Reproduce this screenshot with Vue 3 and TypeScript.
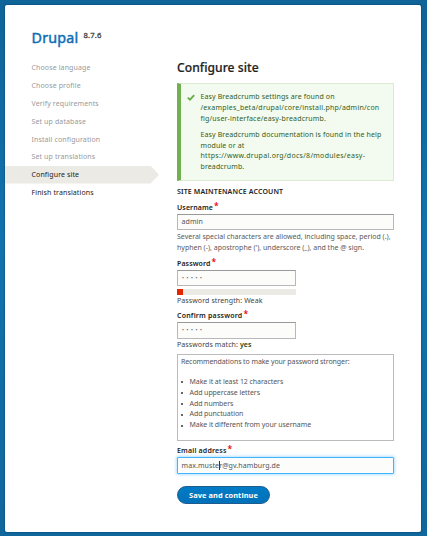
<script setup lang="ts">
import { ref } from 'vue'

interface Task {
  label: string
  state: 'done' | 'active' | 'pending'
}

const tasks: Task[] = [
  { label: 'Choose language', state: 'done' },
  { label: 'Choose profile', state: 'done' },
  { label: 'Verify requirements', state: 'done' },
  { label: 'Set up database', state: 'done' },
  { label: 'Install configuration', state: 'done' },
  { label: 'Set up translations', state: 'done' },
  { label: 'Configure site', state: 'active' },
  { label: 'Finish translations', state: 'pending' },
]

const tips: string[] = [
  'Make it at least 12 characters',
  'Add uppercase letters',
  'Add numbers',
  'Add punctuation',
  'Make it different from your username',
]

const strength = ref(5)
</script>

<template>
  <div class="page">
    <div class="card">
      <aside class="sidebar">
        <div class="brand">Drupal<span class="version">8.7.6</span></div>
        <ol class="tasks">
          <li v-for="t in tasks" :key="t.label" :class="t.state">{{ t.label }}</li>
        </ol>
      </aside>
      <main class="main">
        <h1>Configure site</h1>
        <div class="message">
          <svg class="check" viewBox="0 0 8 7"><path d="M0.8 3.6 L3 5.7 L7.2 1.2" /></svg>
          <p class="m1">Easy Breadcrumb settings are found on<br /><span class="path">/examples_beta/drupal/core/install.php/admin/con</span><br /><span class="path2">fig/user-interface/easy-breadcrumb.</span></p>
          <p>Easy Breadcrumb documentation is found in the help<br />module or at<br /><span class="url">https://www.drupal.org/docs/8/modules/easy-</span><br />breadcrumb.</p>
        </div>
        <h2>SITE MAINTENANCE ACCOUNT</h2>
        <label class="l-user">Username<i>*</i></label>
        <div class="field user">admin</div>
        <p class="desc">Several special characters are allowed, including space, period (.),<br /><span class="desc2">hyphen (-), apostrophe ('), underscore (_), and the @ sign.</span></p>
        <label class="l-pass">Password<i>*</i></label>
        <div class="field short"><span class="dots">•••••</span></div>
        <div class="meter"><div class="fill" :style="{ width: strength + '%' }"></div></div>
        <div class="status">Password strength: Weak</div>
        <label class="l-conf">Confirm password<i>*</i></label>
        <div class="field short conf"><span class="dots">•••••</span></div>
        <div class="status match">Passwords match: <b>yes</b></div>
        <div class="tips">
          <div class="intro">Recommendations to make your password stronger:</div>
          <ul>
            <li v-for="tip in tips" :key="tip">{{ tip }}</li>
          </ul>
        </div>
        <label class="l-mail">Email address<i>*</i></label>
        <div class="field mail">max.muste<span class="caret"></span>r@gv.hamburg.de</div>
        <button type="button">Save and continue</button>
      </main>
    </div>
  </div>
</template>

<style>
body {
  margin: 0;
  overflow: hidden;
}
</style>

<style scoped>
.page {
  box-sizing: border-box;
  width: 427px;
  height: 536px;
  padding: 5px 6px 4px 5px;
  background: linear-gradient(#0f6498, #1272ad 45%, #10679c);
  font-family: "Noto Sans", "Open Sans", sans-serif;
  font-size: 7px;
  line-height: 10.8px;
  color: #222;
  white-space: nowrap;
}
.card {
  box-sizing: border-box;
  display: flex;
  width: 416px;
  height: 527px;
  background: #fff;
  border-radius: 2px;
  box-shadow: 0 0 1px 1px rgba(0, 55, 100, 0.3);
}
.sidebar {
  width: 172px;
  padding-top: 22px;
}
.brand {
  display: flex;
  height: 32px;
  padding-left: 26.5px;
  font-size: 14.3px;
  line-height: 22px;
  letter-spacing: 0.2px;
  color: #0d6db5;
  -webkit-text-stroke: 0.45px #0d6db5;
}
.version {
  margin: -1px 0 0 5px;
  font-size: 7.7px;
  line-height: 18px;
  letter-spacing: 0.15px;
  color: #444;
  -webkit-text-stroke: 0.3px #444;
}
.tasks {
  list-style: none;
  margin: 0;
  padding: 0;
}
.tasks li {
  box-sizing: border-box;
  width: 154px;
  height: 17.8px;
  padding: 0.4px 0 0 26.5px;
  line-height: 17.8px;
  letter-spacing: 0.12px;
  color: #999;
}
.tasks li.active {
  background: #ebeae4;
  color: #222;
  clip-path: polygon(0 0, 145.5px 0, 100% 50%, 145.5px 100%, 0 100%);
}
.tasks li.pending {
  color: #222;
}
.main {
  width: 216.5px;
}
p, ul {
  margin: 0;
  padding: 0;
}
h1 {
  margin: 53px 0 5px;
  height: 20px;
  font-size: 12.1px;
  line-height: 20px;
  font-weight: 500;
  letter-spacing: 0.05px;
  color: #222;
  -webkit-text-stroke: 0.2px #222;
}
.message {
  position: relative;
  box-sizing: border-box;
  height: 98px;
  padding: 8px 0 0 19.5px;
  border: 1px solid #dcebd0;
  border-left: 4px solid #70b050;
  background: #f3faef;
  color: #325e1c;
}
.message p {
  letter-spacing: 0.12px;
}
.path {
  letter-spacing: 0.23px;
}
.path2 {
  letter-spacing: 0.18px;
}
.url {
  letter-spacing: 0.29px;
}
.m1 {
  margin-bottom: 5.4px;
}
.check {
  position: absolute;
  left: 6px;
  top: 10px;
  width: 8px;
  height: 7px;
}
.check path {
  fill: none;
  stroke: #68ac48;
  stroke-width: 1.8;
}
h2 {
  margin: 5px 0 0;
  height: 12px;
  font-size: 7px;
  line-height: 12px;
  font-weight: 600;
  letter-spacing: 0.14px;
}
label {
  display: block;
  height: 12px;
  line-height: 12.6px;
  font-weight: 600;
  letter-spacing: 0.1px;
  color: #222;
}
label i {
  position: relative;
  top: -1px;
  margin-left: 1px;
  font-size: 8.5px;
  font-style: normal;
  line-height: 1px;
  color: #e00;
}
.l-user {
  margin-top: 4px;
}
.l-conf {
  letter-spacing: 0.2px;
}
.l-mail {
  letter-spacing: 0.18px;
}
.field {
  box-sizing: border-box;
  height: 16px;
  padding-left: 3.5px;
  border: 1px solid #b8b8b8;
  border-top-color: #999;
  background: #fcfcfa;
  line-height: 14.6px;
  letter-spacing: 0.1px;
  color: #555;
}
.short {
  width: 119px;
}
.dots {
  display: block;
  padding-left: 0.5px;
  font-size: 5px;
  line-height: 14px;
  letter-spacing: 2.6px;
}
.desc {
  height: 26px;
  padding-top: 2.4px;
  box-sizing: border-box;
  color: #595959;
}
.l-pass {
  margin-top: 2px;
}
.meter {
  width: 119px;
  height: 6px;
  margin-top: 3px;
  background: #ebeae4;
}
.fill {
  height: 6px;
  background: #e62600;
}
.status {
  height: 10px;
  line-height: 11px;
  letter-spacing: 0.1px;
  color: #444;
}
.status b {
  font-weight: 600;
  color: #1c3f0c;
}
.l-conf {
  margin-top: 5px;
}
.conf {
  height: 17px;
}
.tips {
  box-sizing: border-box;
  height: 87px;
  margin-top: 5px;
  padding: 1.7px 0 0 3px;
  border: 1px solid #bbb;
  letter-spacing: -0.07px;
  color: #555;
}
.intro {
  letter-spacing: -0.09px;
}
.tips ul {
  list-style: none;
  margin-top: 9.5px;
}
.tips li {
  display: flex;
  align-items: center;
}
.tips li::before {
  content: "";
  width: 2px;
  height: 2px;
  margin: 0 7px 0 -0.5px;
  border-radius: 1px;
  background: #333;
}
.l-mail {
  margin-top: 4px;
}
.field.mail {
  height: 17px;
  border-color: #40b6ff;
  border-radius: 1px;
  box-shadow: 0 0 3px 1px #b5e0ff;
  line-height: 15px;
}
.caret {
  display: inline-block;
  width: 1px;
  height: 9px;
  margin-right: -1px;
  vertical-align: -2px;
  background: #333;
}
button {
  display: block;
  width: 93px;
  height: 18px;
  margin: 12px 0 0;
  padding: 0;
  border: 1px solid #1e5c90;
  border-radius: 9px;
  background: linear-gradient(#007bc6, #0071b8);
  font-family: inherit;
  font-size: 7.4px;
  line-height: 15px;
  font-weight: 700;
  letter-spacing: 0.08px;
  color: #fff;
}
</style>
